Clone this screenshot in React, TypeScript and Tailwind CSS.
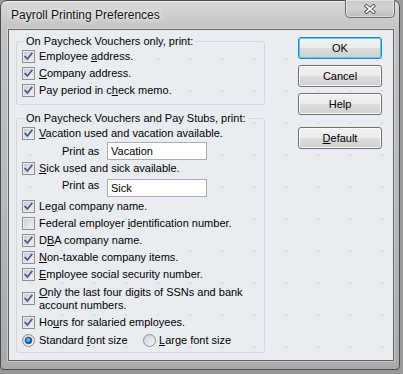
import type { ReactNode } from "react";

function CheckBox({ checked = true }: { checked?: boolean }) {
  return (
    <svg width="13" height="13" viewBox="0 0 13 13" className="shrink-0">
      <defs>
        <linearGradient id="cbfill" x1="0" y1="0" x2="1" y2="1">
          <stop offset="0" stopColor="#c9cdd3" />
          <stop offset="1" stopColor="#f3f4f6" />
        </linearGradient>
      </defs>
      <rect x="0.5" y="0.5" width="12" height="12" fill="#f4f4f4" stroke="#8e8f8f" />
      <rect x="2" y="2" width="9" height="9" fill="url(#cbfill)" stroke="#d2d4d8" strokeWidth="0.6" />
      {checked && (
        <path
          d="M3.2 6.6 L5.4 9 L9.8 3.4"
          fill="none"
          stroke="#40598c"
          strokeWidth="1.7"
          strokeLinecap="square"
        />
      )}
    </svg>
  );
}

function Radio({ checked = false }: { checked?: boolean }) {
  return (
    <svg width="13" height="13" viewBox="0 0 13 13" className="shrink-0">
      <defs>
        <linearGradient id="rfill" x1="0" y1="0" x2="1" y2="1">
          <stop offset="0" stopColor="#cbcfd5" />
          <stop offset="1" stopColor="#f7f7f7" />
        </linearGradient>
        <radialGradient id="rdot" cx="0.45" cy="0.4" r="0.6">
          <stop offset="0" stopColor="#8fdcff" />
          <stop offset="0.5" stopColor="#2a86d0" />
          <stop offset="1" stopColor="#0c3f80" />
        </radialGradient>
      </defs>
      <circle cx="6.5" cy="6.5" r="6" fill="url(#rfill)" stroke="#8e8f8f" />
      {checked && <circle cx="6.5" cy="6.5" r="3.3" fill="url(#rdot)" stroke="#21406e" strokeWidth="0.7" />}
    </svg>
  );
}

function Row({ label, checked = true }: { label: ReactNode; checked?: boolean }) {
  return (
    <div className="flex h-[17px] items-center gap-[4px] leading-[13px]">
      <CheckBox checked={checked} />
      <span className="whitespace-nowrap">{label}</span>
    </div>
  );
}

function PrintAs({ value, className }: { value: string; className: string }) {
  return (
    <div className={className}>
      <span className="w-[45px] leading-[13px]">Print as</span>
      <input
        readOnly
        value={value}
        className="h-[18px] w-[100px] border border-[#abadb3] bg-white pl-[3px] text-[11px] leading-[16px] outline-none"
      />
    </div>
  );
}

function Btn({ children, primary = false }: { children: ReactNode; primary?: boolean }) {
  return (
    <div
      className={
        primary
          ? "flex h-[22px] items-center justify-center rounded-[3px] border border-[#3c7fb1] bg-[linear-gradient(#f2f2f2,#ebebeb_50%,#dddddd_50%,#cfcfcf)] shadow-[inset_0_0_0_1px_#48d0f6]"
          : "flex h-[22px] items-center justify-center rounded-[3px] border border-[#707070] bg-[linear-gradient(#f2f2f2,#ebebeb_50%,#dddddd_50%,#cfcfcf)] shadow-[inset_0_0_0_1px_#fcfcfc]"
      }
    >
      {children}
    </div>
  );
}

export default function App() {
  return (
    <div className="h-[374px] w-[403px] bg-[#9a9a9a] font-['Liberation_Sans',Arial,sans-serif] text-[11px] text-black">
      <div className="flex h-[370px] w-[400px] flex-col rounded-t-[7px] rounded-b-[4px] border border-[#4d4d4d] bg-[linear-gradient(180deg,#d9d9d9,#c2c2c2_8%,#b6b6b6_60%,#aaaaaa)] pb-[8px] pl-[7px] pr-[5px] shadow-[inset_0_1px_0_#efefef]">
        {/* Title bar */}
        <div className="flex h-[28px] items-start">
          <span className="ml-[3px] mt-[7px] text-[12px] leading-[15px] text-[#111] [text-shadow:0_0_6px_#ffffff,0_0_3px_#f2f2f2]">
            Payroll Printing Preferences
          </span>
          <div className="-mr-[1px] -mt-[1px] ml-auto flex h-[18px] w-[50px] items-center justify-center rounded-b-[5px] border border-t-0 border-[#6c6c6c] bg-[linear-gradient(#c8c8c8,#d3d3d3_45%,#bdbdbd)] shadow-[inset_0_0_0_1px_rgba(255,255,255,0.45)]">
            <svg width="12" height="10" viewBox="0 0 12 10" className="mt-[1px]">
              <path d="M2.5 2 L9.5 8 M9.5 2 L2.5 8" stroke="#4a4a4a" strokeWidth="3.6" strokeLinecap="square" />
              <path d="M2.5 2 L9.5 8 M9.5 2 L2.5 8" stroke="#ffffff" strokeWidth="1.8" strokeLinecap="square" />
            </svg>
          </div>
        </div>

        {/* Client area */}
        <div className="flex h-[332px] w-[386px] border border-[#636363] bg-[#e9edf2] bg-[radial-gradient(circle,#d3d8de_0.6px,transparent_1.1px)] bg-size-[32px_32px] bg-position-[5px_13px] shadow-[0_0_0_1px_rgba(255,255,255,0.35)]">
          <div className="ml-[7px] mt-[4px] flex w-[249px] flex-col">
            <fieldset className="rounded-[3px] border border-[#d0d9e0] pb-[5px] pl-[5px]">
              <legend className="ml-[2px] px-[2px] leading-[14px]">On Paycheck Vouchers only, print:</legend>
              <Row label={<>Employee <u>a</u>ddress.</>} />
              <Row label={<><u>C</u>ompany address.</>} />
              <Row label={<>Pay period in c<u>h</u>eck memo.</>} />
            </fieldset>

            <fieldset className="mt-[6px] rounded-[3px] border border-[#d0d9e0] pb-[2px] pl-[5px]">
              <legend className="ml-[2px] px-[2px] leading-[14px]">On Paycheck Vouchers and Pay Stubs, print:</legend>
              <Row label={<><u>V</u>acation used and vacation available.</>} />
              <PrintAs value="Vacation" className="ml-[40px] flex h-[18px] items-center" />
              <Row label={<><u>S</u>ick used and sick available.</>} />
              <PrintAs value="Sick" className="ml-[40px] flex h-[21px] items-start pt-[2px]" />
              <Row label={<>Le<u>g</u>al company name.</>} />
              <Row checked={false} label={<>Federal employer <u>i</u>dentification number.</>} />
              <Row label={<>D<u>B</u>A company name.</>} />
              <Row label={<><u>N</u>on-taxable company items.</>} />
              <Row label={<><u>E</u>mployee social security number.</>} />
              <div className="flex h-[31px] items-center gap-[4px] leading-[13px]">
                <CheckBox />
                <span>
                  <u>O</u>nly the last four digits of SSNs and bank
                  <br />
                  account numbers.
                </span>
              </div>
              <Row label={<>Ho<u>u</u>rs for salaried employees.</>} />
              <div className="flex h-[19px] items-center leading-[13px]">
                <div className="flex w-[121px] items-center gap-[4px]">
                  <Radio checked />
                  <span>Standard <u>f</u>ont size</span>
                </div>
                <div className="flex items-center gap-[3px]">
                  <Radio />
                  <span><u>L</u>arge font size</span>
                </div>
              </div>
            </fieldset>
          </div>

          <div className="ml-[33px] mt-[7px] flex w-[84px] flex-col">
            <Btn primary>OK</Btn>
            <div className="mt-[6px]">
              <Btn>Cancel</Btn>
            </div>
            <div className="mt-[6px]">
              <Btn>Help</Btn>
            </div>
            <div className="mt-[12px]">
              <Btn>
                <span><u>D</u>efault</span>
              </Btn>
            </div>
          </div>
        </div>
      </div>
    </div>
  );
}
